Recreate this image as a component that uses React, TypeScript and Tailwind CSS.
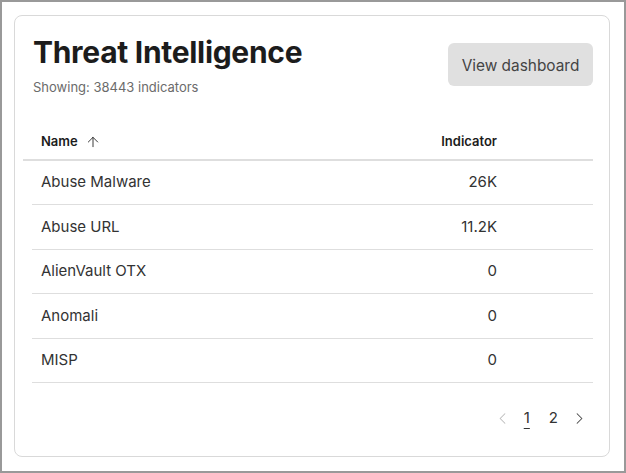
import { ChevronLeft, ChevronRight, ArrowUp } from "lucide-react"

const ROWS = [
  { name: "Abuse Malware", value: "26K" },
  { name: "Abuse URL", value: "11.2K" },
  { name: "AlienVault OTX", value: "0" },
  { name: "Anomali", value: "0" },
  { name: "MISP", value: "0" },
]

export default function App() {
  return (
    <div
      className="flex h-[473px] w-[626px] flex-col border-2 border-[#999999] bg-white pt-[13px] pr-[14px] pb-[14px] pl-3 text-[#222]"
      style={{ fontFamily: "Inter, 'Noto Sans', sans-serif" }}
    >
      <div className="flex flex-1 flex-col rounded-lg border border-[#d9d9d9]">
        <div className="flex items-start justify-between pt-[18px] pr-4 pl-[18px]">
          <div>
            <h1 className="text-[30px] leading-[36px] font-bold tracking-[-0.3px] text-[#1c1c1c]">
              Threat Intelligence
            </h1>
            <p className="mt-[8px] text-[13px] text-[#6b6b6b]">
              Showing: 38443 indicators
            </p>
          </div>
          <button className="mt-[9px] h-[43px] w-[145px] rounded-md bg-[#e0e0e0] pt-[3px] text-[15.4px] text-[#444]">
            View dashboard
          </button>
        </div>

        <div className="mt-[28px] pr-4 pl-2">
          <div className="flex h-[35px] items-center border-b-2 border-[#dedede] pl-[18px] text-[13px] font-semibold text-[#1c1c1c]">
            <div className="flex flex-1 items-center gap-[7px]">
              Name
              <ArrowUp size={16} strokeWidth={1.3} />
            </div>
            <div className="w-[200px] pr-[96px] text-right">Indicator</div>
          </div>
          <div className="pl-[9px]">
            {ROWS.map((r) => (
              <div
                key={r.name}
                className="flex h-[44.5px] items-center border-b border-[#dedede] pl-[9px] text-[15px] text-[#333]"
              >
                <div className="flex-1">{r.name}</div>
                <div className="w-[200px] pr-[96px] text-right">{r.value}</div>
              </div>
            ))}
          </div>
        </div>

        <div className="mt-[24px] flex items-center justify-end pr-[20px] text-[15px] text-[#333]">
          <ChevronLeft size={19} strokeWidth={1.3} className="text-[#bbbbbb]" />
          <span className="ml-[8px] px-1 underline underline-offset-[5px]">1</span>
          <span className="ml-[11px] px-1">2</span>
          <ChevronRight size={19} strokeWidth={1.3} className="ml-[8px] text-[#444]" />
        </div>
      </div>
    </div>
  )
}
